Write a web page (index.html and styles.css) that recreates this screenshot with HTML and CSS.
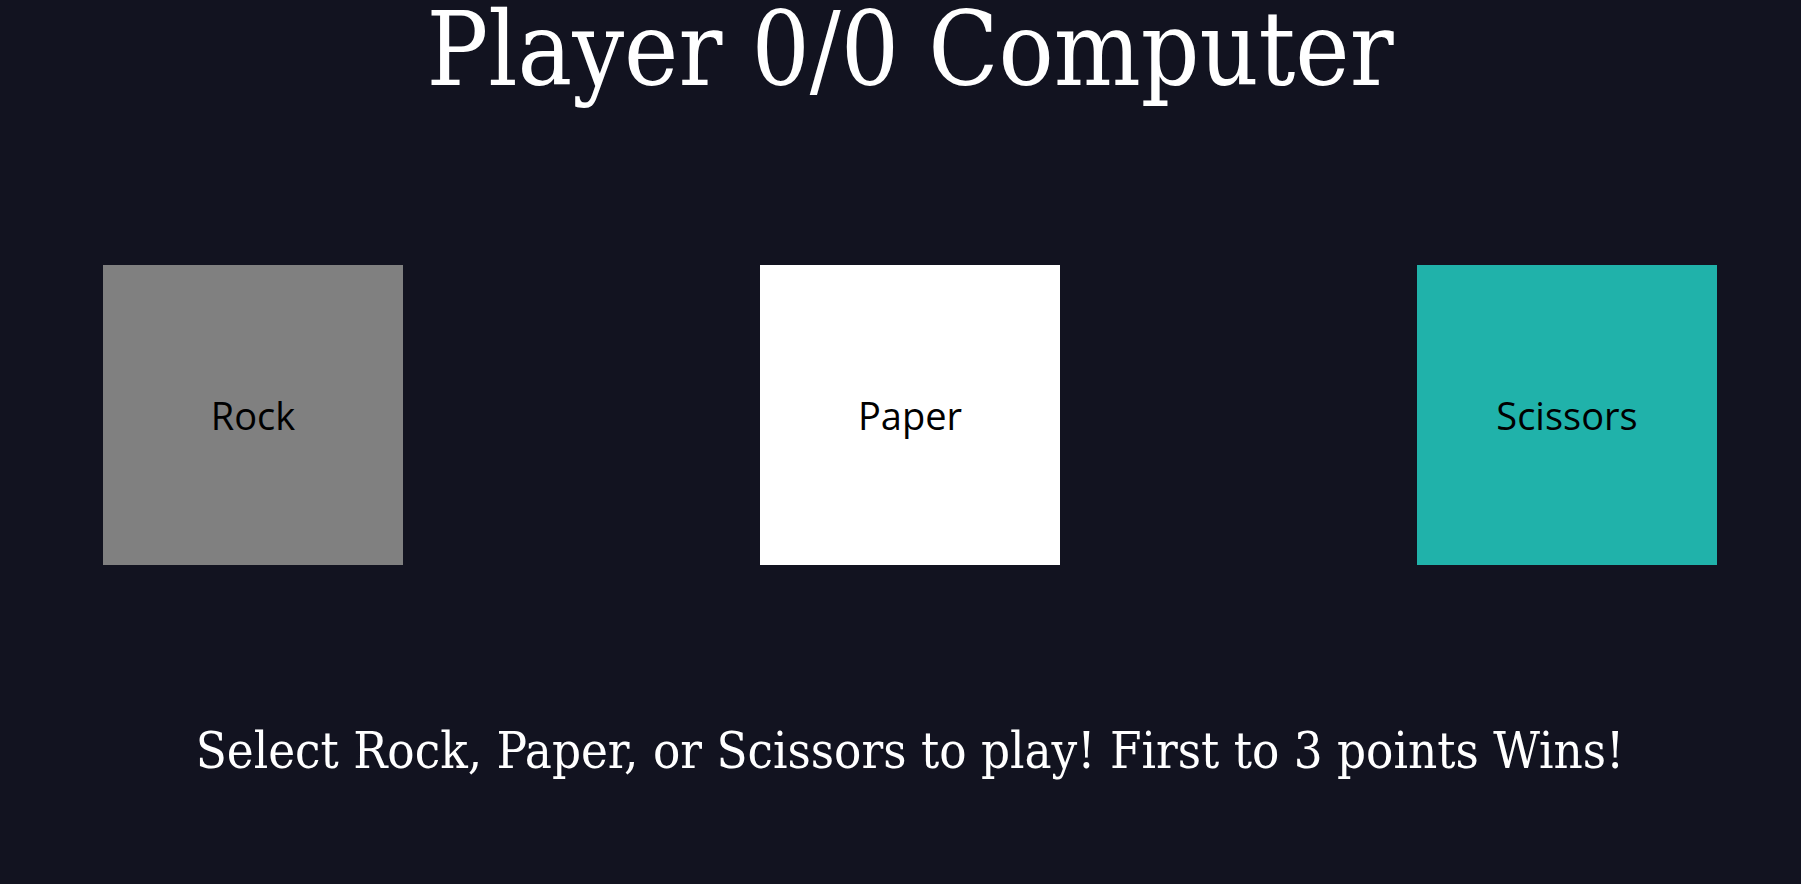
FILE: index.html
```html
<!DOCTYPE html>
<html>
<head>
<meta charset="utf-8">
<link rel="stylesheet" href="styles.css">
</head>
<body>
<h1 class="score">Player 0/0 Computer</h1>
<div class="choices">
  <div class="choice rock">Rock</div>
  <div class="choice paper">Paper</div>
  <div class="choice scissors">Scissors</div>
</div>
<p class="message">Select Rock, Paper, or Scissors to play! First to 3 points Wins!</p>
</body>
</html>
```
FILE: styles.css
```css
html, body {
  margin: 0;
  padding: 0;
  background: #121320;
  height: 100%;
}
body {
  font-family: "DejaVu Serif", serif;
  font-stretch: condensed;
  color: #fff;
  display: flex;
  flex-direction: column;
}
.score {
  margin: 0;
  padding-left: 19px;
  text-align: center;
  font-weight: normal;
  font-size: 102px;
  line-height: 100px;
}
.choices {
  display: flex;
  gap: 357px;
  padding-left: 103px;
  margin-top: 165px;
}
.choice {
  width: 300px;
  height: 300px;
  display: flex;
  align-items: center;
  justify-content: center;
  font-family: "Open Sans", sans-serif;
  font-stretch: normal;
  font-size: 38px;
  color: #000;
}
.rock { background: #808080; }
.paper { background: #fff; }
.scissors { background: #20b2aa; }
.message {
  margin: 151px 0 0;
  padding-left: 19px;
  text-align: center;
  font-size: 50.5px;
  line-height: 70px;
}
```
